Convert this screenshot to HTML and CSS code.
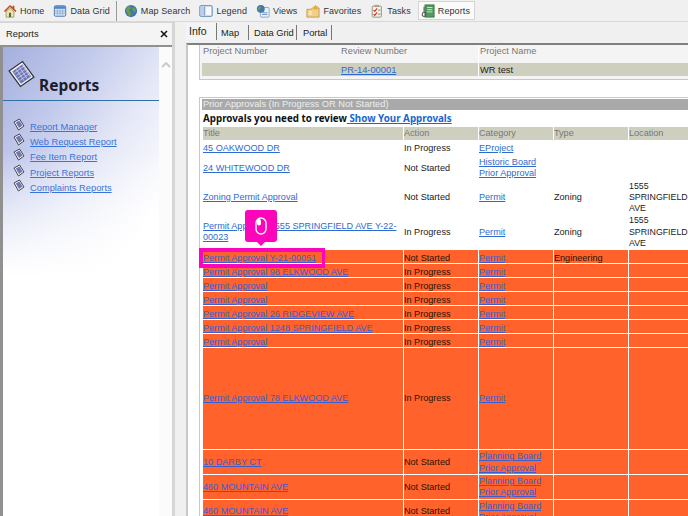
FILE: index.html
```html
<!DOCTYPE html>
<html lang="en">
<head>
    <meta charset="UTF-8">
    <title>Reports</title>
    <link rel="stylesheet" href="styles.css">
</head>
<body>
    <!-- Top toolbar -->
    <div class="toolbar">
        <div class="tool">
            <svg class="tool-icon" viewBox="0 0 16 16"><path d="M8 1 1 8l1.500 1L8 3.500 14 9l1.500-1-2.500-2.500V2h-2v1.500z" fill="#c0501c"/><path d="M3.500 9 8 5l4.500 4v6h-9z" fill="#f3e3b4" stroke="#7a5a2c" stroke-width=".6"/><rect x="6.800" y="10" width="2.400" height="5" fill="#3f7a34"/></svg>
            Home
        </div>
        <div class="tool">
            <svg class="tool-icon" viewBox="0 0 16 16"><rect x="1.500" y="2" width="13" height="12" rx="1.500" fill="#dbe6f5" stroke="#3f6fa8"/><rect x="2" y="2.500" width="12" height="3" fill="#4f86c6"/><path d="M5 6v7M8 6v7M11 6v7M2 8h12M2 10.500h12" stroke="#7fa2cf" stroke-width=".8"/></svg>
            Data Grid
        </div>
        <div class="tool-sep"></div>
        <div class="tool">
            <svg class="tool-icon" viewBox="0 0 16 16"><circle cx="8" cy="8" r="7" fill="#3d78b4"/><path d="M4 3c2-1 4 0 4 1.500S6 6 6 7.500 8 9 8 11s-1 3-2 2.500S4 10 3 9 2 5 4 3zM10 4c2 0 4 2 3.500 4S11 9 10 7.500 9 5 10 4z" fill="#6f9a4c"/></svg>
            Map Search
        </div>
        <div class="tool">
            <svg class="tool-icon" viewBox="0 0 16 16"><rect x="1" y="2" width="14" height="12" rx="1" fill="#f4f7fb" stroke="#3f6fa8"/><rect x="2" y="3" width="4" height="10" fill="#b9cfea"/><path d="M6.500 3v10" stroke="#3f6fa8" stroke-width=".8"/></svg>
            Legend
        </div>
        <div class="tool">
            <svg class="tool-icon" viewBox="0 0 16 16"><rect x="5" y="4" width="10" height="11" rx="1" fill="#e9f0f8" stroke="#6d8fb8" stroke-width=".8"/><circle cx="5.500" cy="5.500" r="4.500" fill="#3d78b4"/><path d="M3 3.500c1-1 3-1 3 .5S4.500 5 4.500 6.500 3 8 2.500 6.500 2 4.500 3 3.500z" fill="#6f9a4c"/><path d="M7 10h6M7 12h6" stroke="#6d8fb8"/></svg>
            Views
        </div>
        <div class="tool">
            <svg class="tool-icon" viewBox="0 0 16 16"><path d="M1 6h5l1-1.500h8V15H1z" fill="#f1cf84" stroke="#b98a3a" stroke-width=".8"/><path d="M11 .5l1 2.200 2.300.3-1.700 1.600.5 2.300-2.100-1.200L9 6.900l.5-2.300L7.800 3l2.200-.3z" fill="#e7a83c"/><path d="M3 9h4M3 11.500h4" stroke="#fff" stroke-width="1"/></svg>
            Favorites
        </div>
        <div class="tool">
            <svg class="tool-icon" viewBox="0 0 16 16"><rect x="2.500" y="2.500" width="10.500" height="12.500" rx="1" fill="#f5f3e8" stroke="#77705c" stroke-width=".8"/><rect x="5" y="1" width="5.500" height="2.500" fill="#a9a58f"/><path d="M4 7l1.500 1.500L8 5M4 11.500 5.500 13 8 9.500" fill="none" stroke="#d2342a" stroke-width="1.300"/><path d="M9 7h3M9 11.500h3" stroke="#77705c"/></svg>
            Tasks
        </div>
        <div class="tool tool-active">
            <svg class="tool-icon" viewBox="0 0 16 16"><rect x="4.500" y="1" width="10.500" height="14" fill="#4f9a5c" stroke="#2c6a3a" stroke-width=".8"/><path d="M7 4h6M7 6.500h6M7 9h6" stroke="#d7eeda"/><circle cx="3.500" cy="12" r="2.200" fill="none" stroke="#555" stroke-width="1.200"/><path d="M3.500 3v7" stroke="#555" stroke-width="1.200"/></svg>
            Reports
        </div>
    </div>

    <div class="main">
        <!-- Left panel -->
        <div class="side">
            <div class="side-head">
                <span>Reports</span>
                <svg class="side-close" viewBox="0 0 8 8"><path d="M1 1l6 6M7 1 1 7" stroke="#111" stroke-width="1.500"/></svg>
            </div>
            <div class="side-body">
                <div class="side-inner">
                    <div class="side-title">
                        <svg class="side-title-icon" viewBox="0 0 28 28">
                            <path d="M2 11 15 2l11 15-13 9z" fill="#f4f4f8" stroke="#333" stroke-width="1.200"/>
                            <path d="M5 11.500 15 4.500l8.500 12-10 7z" fill="#6f77b8"/>
                            <path d="M7 13l10-7M9 15.500l10-7M10.500 18l10-7M12 20.500l10-7M9 9.500l7.500 11M12 7.500l7.500 11M15 5.500l7.500 11" stroke="#e6e8f6" stroke-width=".6"/>
                        </svg>
                        <span>Reports</span>
                    </div>
                    <ul class="report-list">
                        <li><svg class="report-icon" viewBox="0 0 12 13"><path d="M1 4 6.500 1 11 8l-5.500 4z" fill="#f4f4f8" stroke="#333" stroke-width=".9"/><path d="M2.800 4.500 6.300 2.500 9.500 7.600 6 10z" fill="#6f77b8"/></svg><a href="#">Report Manager</a></li>
                        <li><svg class="report-icon" viewBox="0 0 12 13"><path d="M1 4 6.500 1 11 8l-5.500 4z" fill="#f4f4f8" stroke="#333" stroke-width=".9"/><path d="M2.800 4.500 6.300 2.500 9.500 7.600 6 10z" fill="#6f77b8"/></svg><a href="#">Web Request Report</a></li>
                        <li><svg class="report-icon" viewBox="0 0 12 13"><path d="M1 4 6.500 1 11 8l-5.500 4z" fill="#f4f4f8" stroke="#333" stroke-width=".9"/><path d="M2.800 4.500 6.300 2.500 9.500 7.600 6 10z" fill="#6f77b8"/></svg><a href="#">Fee Item Report</a></li>
                        <li><svg class="report-icon" viewBox="0 0 12 13"><path d="M1 4 6.500 1 11 8l-5.500 4z" fill="#f4f4f8" stroke="#333" stroke-width=".9"/><path d="M2.800 4.500 6.300 2.500 9.500 7.600 6 10z" fill="#6f77b8"/></svg><a href="#">Project Reports</a></li>
                        <li><svg class="report-icon" viewBox="0 0 12 13"><path d="M1 4 6.500 1 11 8l-5.500 4z" fill="#f4f4f8" stroke="#333" stroke-width=".9"/><path d="M2.800 4.500 6.300 2.500 9.500 7.600 6 10z" fill="#6f77b8"/></svg><a href="#">Complaints Reports</a></li>
                    </ul>
                </div>
                <div class="side-scroll">
                    <svg class="scroll-arrow" viewBox="0 0 10 6"><path d="M1 5l4-4 4 4" fill="none" stroke="#c8c8c8" stroke-width="1.800"/></svg>
                </div>
            </div>
        </div>

        <!-- Right content -->
        <div class="content">
            <div class="tabs">
                <div class="tab tab-active">Info</div>
                <div class="tab tab-map">Map</div>
                <div class="tab tab-grid">Data Grid</div>
                <div class="tab tab-portal">Portal</div>
            </div>
            <div class="page">
                <div class="project-box">
                    <div class="project-row project-head">
                        <div class="project-cell cell-number">Project Number</div>
                        <div class="project-cell cell-review">Review Number</div>
                        <div class="project-cell">Project Name</div>
                    </div>
                    <div class="project-row project-data">
                        <div class="project-cell cell-number"></div>
                        <div class="project-cell cell-review"><a href="#">PR-14-00001</a></div>
                        <div class="project-cell">WR test</div>
                    </div>
                </div>

                <div class="approvals">
                    <div class="approvals-bar">Prior Approvals (In Progress OR Not Started)</div>
                    <div class="approvals-sub">Approvals you need to review<a href="#"> Show Your Approvals</a></div>
                    <table class="grid">
                        <colgroup>
                            <col class="col-title"><col class="col-action"><col class="col-cat"><col class="col-type"><col class="col-loc">
                        </colgroup>
                        <tr class="grid-head"><th>Title</th><th>Action</th><th>Category</th><th>Type</th><th>Location</th></tr>
                        <tr class="row-first"><td><a href="#">45 OAKWOOD DR</a></td><td>In Progress</td><td><a href="#">EProject</a></td><td></td><td></td></tr>
                        <tr><td><a href="#">24 WHITEWOOD DR</a></td><td>Not Started</td><td><a href="#">Historic Board Prior Approval</a></td><td></td><td></td></tr>
                        <tr><td><a href="#">Zoning Permit Approval</a></td><td>Not Started</td><td><a href="#">Permit</a></td><td>Zoning</td><td class="loc">1555 SPRINGFIELD AVE</td></tr>
                        <tr><td><a href="#">Permit Approval 1555 SPRINGFIELD AVE Y-22-00023</a></td><td>In Progress</td><td><a href="#">Permit</a></td><td>Zoning</td><td class="loc">1555 SPRINGFIELD AVE</td></tr>
                        <tr class="late row-small"><td class="marked"><a href="#">Permit Approval Y-21-00051</a></td><td>Not Started</td><td><a href="#">Permit</a></td><td>Engineering</td><td></td></tr>
                        <tr class="late row-small"><td><a href="#">Permit Approval 98 ELKWOOD AVE</a></td><td>In Progress</td><td><a href="#">Permit</a></td><td></td><td></td></tr>
                        <tr class="late row-small"><td><a href="#">Permit Approval</a></td><td>In Progress</td><td><a href="#">Permit</a></td><td></td><td></td></tr>
                        <tr class="late row-small"><td><a href="#">Permit Approval</a></td><td>In Progress</td><td><a href="#">Permit</a></td><td></td><td></td></tr>
                        <tr class="late row-small"><td><a href="#">Permit Approval 26 RIDGEVIEW AVE</a></td><td>In Progress</td><td><a href="#">Permit</a></td><td></td><td></td></tr>
                        <tr class="late row-small"><td><a href="#">Permit Approval 1248 SPRINGFIELD AVE</a></td><td>In Progress</td><td><a href="#">Permit</a></td><td></td><td></td></tr>
                        <tr class="late row-small"><td><a href="#">Permit Approval</a></td><td>In Progress</td><td><a href="#">Permit</a></td><td></td><td></td></tr>
                        <tr class="late row-tall"><td><a href="#">Permit Approval 78 ELKWOOD AVE</a></td><td>In Progress</td><td><a href="#">Permit</a></td><td></td><td></td></tr>
                        <tr class="late row-two"><td><a href="#">10 DARBY CT</a></td><td>Not Started</td><td><a href="#">Planning Board Prior Approval</a></td><td></td><td></td></tr>
                        <tr class="late row-two"><td><a href="#">460 MOUNTAIN AVE</a></td><td>Not Started</td><td><a href="#">Planning Board Prior Approval</a></td><td></td><td></td></tr>
                        <tr class="late row-two"><td><a href="#">460 MOUNTAIN AVE</a></td><td>Not Started</td><td><a href="#">Planning Board Prior Approval</a></td><td></td><td></td></tr>
                    </table>
                </div>
            </div>
        </div>
    </div>

    <!-- Mouse callout over the marked row -->
    <div class="callout">
        <svg class="callout-icon" viewBox="0 0 12 18"><rect x="1" y="1" width="10" height="16" rx="5" fill="none" stroke="#fff" stroke-width="1.400"/><rect x="2" y="2" width="4" height="6.500" rx="2" fill="#fff"/></svg>
    </div>
</body>
</html>
```

FILE: styles.css
```css
html, body {
    margin: 0;
    padding: 0;
    height: 516px;
    overflow: hidden;
}

body {
    position: relative;
    font-family: "Liberation Sans", sans-serif;
    font-size: 9.300px;
    color: #222;
    background: #f0f0f0;
}

a {
    color: #2f6ad0;
}

/* Toolbar */
.toolbar {
    display: flex;
    align-items: center;
    height: 21px;
    padding-left: 3px;
    background: #f0f0f0;
    border-bottom: 1px solid #d8d8d8;
    font-size: 9px;
    letter-spacing: 0.1px;
}

.tool {
    display: flex;
    align-items: center;
    gap: 3px;
    height: 20px;
    margin-right: 9px;
    color: #333;
}

.tool-active {
    background: #fafafa;
    border: 1px solid #d4d4d4;
    box-sizing: border-box;
    height: 19px;
    padding: 0 4px 0 2px;
    margin-left: -2px;
    margin-right: 0;
}

.tool-icon {
    width: 14px;
    height: 14px;
}

.tool-sep {
    width: 1px;
    height: 20px;
    background: #9a9a9a;
    margin: 0 7px 0 -3px;
}

/* Layout */
.main {
    display: flex;
    height: 494px;
}

/* Left panel */
.side {
    width: 175px;
    box-sizing: border-box;
    border-right: 3px solid #d6d6d6;
    border-top: 1px solid #d6d6d6;
    background: #f0f0f0;
    display: flex;
    flex-direction: column;
    flex: none;
}

.side-head {
    display: flex;
    align-items: center;
    justify-content: space-between;
    height: 22px;
    padding: 0 4px 0 6px;
    background: #f4f4f4;
}

.side-close {
    width: 8px;
    height: 8px;
}

.side-body {
    flex: 1;
    display: flex;
    border-left: 3px solid #909090;
    border-top: 2px solid #909090;
    background: #fff;
}

.side-inner {
    width: 156px;
    background:
        linear-gradient(to bottom, rgba(255, 255, 255, 0) 45%, #fff 100%) no-repeat,
        linear-gradient(to bottom right, #a4afdc 0%, #c3cbec 30%, #e4e7f7 55%, #ffffff 85%) no-repeat;
    background-size: 156px 230px;
}

.side-title {
    display: flex;
    align-items: flex-end;
    height: 54px;
    box-sizing: border-box;
    padding: 0 0 3px 4px;
    border-bottom: 1px solid #2f6fa8;
    font-family: "Noto Sans", sans-serif;
    font-size: 15.500px;
    font-weight: bold;
    color: #1c1c2c;
    line-height: 24px;
}

.side-title-icon {
    width: 29px;
    height: 30px;
    margin: 0 3px 8px 0;
    flex: none;
}

.report-list {
    list-style: none;
    margin: 18px 0 0 10px;
    padding: 0;
}

.report-list li {
    display: flex;
    align-items: center;
    height: 15.300px;
    gap: 5px;
}

.report-list a {
    color: #3a72d8;
}

.report-icon {
    width: 12px;
    height: 13px;
    margin-top: -5px;
}

.side-scroll {
    flex: 1;
    background: #fbfbfb;
    text-align: center;
}

.scroll-arrow {
    display: block;
    width: 10px;
    height: 6px;
    margin: 15px auto 0;
}

/* Right content */
.content {
    flex: 1;
    min-width: 0;
    padding: 1px 0 0 11px;
}

.tabs {
    display: flex;
    height: 20px;
}

.tab {
    box-sizing: border-box;
    padding: 3px 0 0 4px;
    border-right: 1px solid #777;
    height: 15px;
    margin-top: 2px;
}

.tab-active {
    width: 31px;
    background: #f4f4f4;
    padding: 2px 0 0 3px;
    margin-top: 0;
    height: 17px;
    font-size: 10.500px;
}

.tab-map { width: 32px; }
.tab-grid { width: 48px; padding-left: 5px; }
.tab-portal { width: 35px; padding-left: 6px; }

.page {
    height: 472px;
    background: #fff;
    border-top: 2px solid #808080;
    border-left: 2px solid #c8c8c8;
    overflow: hidden;
}

.project-box {
    margin-left: 11px;
    border-left: 1px solid #c8c8c8;
    border-bottom: 1px solid #c8c8c8;
    height: 34px;
    width: 600px;
    background: #f4f4f4;
    color: #777;
}

.project-row {
    display: flex;
}

.project-head {
    height: 18px;
    line-height: 13px;
    padding-left: 2px;
}

.project-data {
    height: 13px;
    line-height: 14px;
    background: #cfcfc0;
    color: #222;
    margin-left: 2px;
}

.project-cell {
    padding-left: 1px;
}

.project-cell.cell-number {
    width: 137px;
}

.project-cell.cell-review {
    width: 137px;
    border-right: 1px solid #fff;
}

/* Approvals */
.approvals {
    margin: 17px 0 0 11px;
    width: 600px;
    border-top: 1px solid #c8c8c8;
    border-left: 1px solid #c8c8c8;
    padding: 1px 0 0 2px;
}

.approvals-bar {
    height: 11px;
    line-height: 11px;
    background: #a9a9a9;
    color: #eee;
    padding-left: 1px;
}

.approvals-sub {
    height: 17px;
    line-height: 18px;
    font-family: "Noto Sans", sans-serif;
    font-size: 9.800px;
    font-weight: bold;
    color: #111;
    padding-left: 1px;
}

.approvals-sub a {
    color: #1a66d0;
}

.grid {
    width: 487px;
    border-collapse: collapse;
    table-layout: fixed;
    font-size: 9.100px;
    line-height: 11.300px;
}

.col-title { width: 201px; }
.col-action { width: 75px; }
.col-cat { width: 75px; }
.col-type { width: 75px; }
.col-loc { width: 61px; }

.grid th {
    background: #cfcfc0;
    color: #777;
    font-weight: normal;
    text-align: left;
    height: 13px;
    padding: 0;
    border-left: 1px solid #fff;
}

.grid td {
    padding: 0;
    border: 1px solid #fff;
    border-width: 1px 0 0 1px;
    vertical-align: middle;
    overflow: hidden;
}

.grid .loc {
    font-size: 8.800px;
}

.row-first td {
    height: 15px;
}

.grid .row-small td {
    height: 10px;
    padding-top: 3px;
    line-height: 10px;
}

.row-tall td {
    height: 101px;
}

.grid .row-two td {
    padding-top: 1px;
}

.late td {
    background: #ff622b;
    color: #2a1408;
}

.late a {
    color: #3a5fd0;
}

.grid .marked {
    position: relative;
    overflow: visible;
}

/* Magenta frame round the marked title */
.marked::before {
    content: "";
    position: absolute;
    left: -4px;
    top: -2px;
    width: 126px;
    height: 20px;
    box-sizing: border-box;
    border: 4px solid #fc05bb;
    border-right-width: 3px;
}

.callout {
    position: absolute;
    left: 245px;
    top: 210px;
    width: 32px;
    height: 32px;
    border-radius: 3px;
    background: #fc05bb;
    display: flex;
    align-items: center;
    justify-content: center;
}

.callout::after {
    content: "";
    position: absolute;
    left: 11px;
    top: 31px;
    border: 5px solid transparent;
    border-top-color: #fc05bb;
}

.callout-icon {
    width: 12px;
    height: 18px;
}
```
